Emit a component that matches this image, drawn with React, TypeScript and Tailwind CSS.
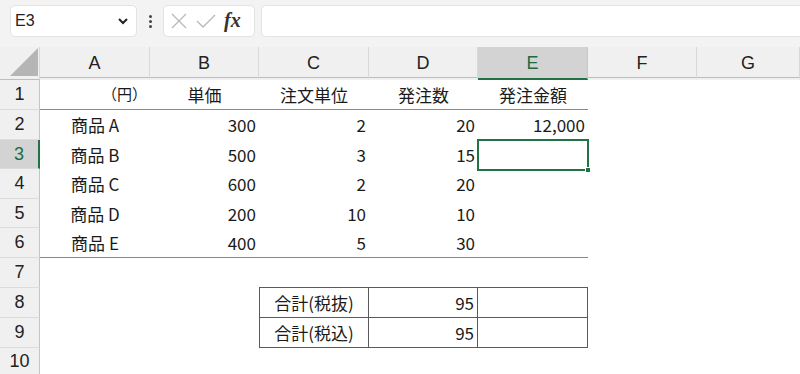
import React from "react";

const jp = { fontFamily: '"Noto Sans CJK JP", "Noto Sans", sans-serif' };
const ui = { fontFamily: '"Liberation Sans", Arial, sans-serif' };

const colW = [40, 110, 109, 110, 109, 110, 109, 103];
const rowH = [30, 30, 29, 30, 29, 30, 30, 30, 30, 28];
const cols = ["A", "B", "C", "D", "E", "F", "G"];

type Cell = { t?: string; a?: "l" | "c" | "r"; cls?: string };

const data: Record<string, Cell> = {
  A1: { t: "（円）", a: "r", cls: "!pr-[3px] !text-[15px]" },
  B1: { t: "単価", a: "c" },
  C1: { t: "注文単位", a: "c" },
  D1: { t: "発注数", a: "c" },
  E1: { t: "発注金額", a: "c" },
  A2: { t: "商品 A", a: "c" }, B2: { t: "300", a: "r" }, C2: { t: "2", a: "r" }, D2: { t: "20", a: "r" }, E2: { t: "12,000", a: "r" },
  A3: { t: "商品 B", a: "c" }, B3: { t: "500", a: "r" }, C3: { t: "3", a: "r" }, D3: { t: "15", a: "r" },
  A4: { t: "商品 C", a: "c" }, B4: { t: "600", a: "r" }, C4: { t: "2", a: "r" }, D4: { t: "20", a: "r" },
  A5: { t: "商品 D", a: "c" }, B5: { t: "200", a: "r" }, C5: { t: "10", a: "r" }, D5: { t: "10", a: "r" },
  A6: { t: "商品 E", a: "c" }, B6: { t: "400", a: "r" }, C6: { t: "5", a: "r" }, D6: { t: "30", a: "r" },
  C8: { t: "合計(税抜)", a: "c" }, D8: { t: "95", a: "r" },
  C9: { t: "合計(税込)", a: "c" }, D9: { t: "95", a: "r" },
};

function borderFor(col: string, row: number): string {
  const ci = cols.indexOf(col);
  let c = "";
  if ((row === 1 || row === 6) && ci <= 4) c += " border-b border-b-[#8a8a8a]";
  if ((row === 8 || row === 9) && ci >= 2 && ci <= 4) {
    c += " border-r border-r-[#5a5a5a] border-b border-b-[#5a5a5a]";
    if (ci === 2) c += " border-l border-l-[#5a5a5a]";
  }
  if (row === 7 && ci >= 2 && ci <= 4) c += " border-b border-b-[#5a5a5a]";
  return c;
}

export default function App() {
  return (
    <div className="w-[800px] h-[374px] overflow-hidden bg-[#f3f3f3] relative" style={ui}>
      {/* formula bar */}
      <div className="h-[47px] flex items-start pt-[5px] pl-[10px]">
        <div className="w-[127px] h-[32px] bg-white rounded-[5px] border border-[#e3e3e3] flex items-center justify-between pl-[4px] pr-[7px]">
          <span className="text-[16px] text-[#222]" style={ui}>E3</span>
          <svg width="12" height="8" viewBox="0 0 12 8">
            <path d="M2 2 L6 6 L10 2" stroke="#222" strokeWidth="2" fill="none" />
          </svg>
        </div>
        <div className="w-[26px] h-[32px] flex flex-col items-center justify-center gap-[2px]">
          <span className="w-[3px] h-[3px] bg-[#444] rounded-full" />
          <span className="w-[3px] h-[3px] bg-[#444] rounded-full" />
          <span className="w-[3px] h-[3px] bg-[#444] rounded-full" />
        </div>
        <div className="w-[92px] h-[32px] bg-white rounded-[5px] border border-[#e3e3e3] flex items-center pl-[6px] gap-[8px]">
          <svg width="18" height="18" viewBox="0 0 18 18">
            <path d="M2 2 L16 16 M16 2 L2 16" stroke="#b8b8b8" strokeWidth="1.3" fill="none" />
          </svg>
          <svg width="20" height="16" viewBox="0 0 20 16">
            <path d="M1 8 L7 14 L19 2" stroke="#b8b8b8" strokeWidth="1.3" fill="none" />
          </svg>
          <span className="italic font-bold text-[20px] text-[#333] -mt-[3px]" style={{ fontFamily: '"Liberation Serif", "Times New Roman", serif' }}>fx</span>
        </div>
        <div className="ml-[6px] flex-1 h-[32px] bg-white rounded-l-[5px] border border-[#e3e3e3] border-r-0" />
      </div>

      {/* grid */}
      <div
        className="grid"
        style={{
          gridTemplateColumns: colW.map((w) => w + "px").join(" "),
          gridTemplateRows: "33px " + rowH.map((h) => h + "px").join(" "),
        }}
      >
        {/* corner */}
        <div className="bg-[#f0f0f0] border-b border-b-[#bdbdbd] border-r border-r-[#d8d8d8] relative">
          <svg className="absolute left-[10px] bottom-[3px]" width="28" height="28" viewBox="0 0 28 28">
            <path d="M0 28 L28 28 L28 0 Z" fill="#b5b5b5" />
          </svg>
        </div>
        {cols.map((c) => (
          <div
            key={c}
            className={
              "flex items-center justify-center text-[18px] border-b-2 " +
              (c === "E"
                ? "bg-[#d3d3d3] text-[#1d6b3f] border-b-[#217346] border-r border-r-[#c8c8c8]"
                : "bg-[#f0f0f0] text-[#222] border-b-[#f0f0f0] border-r border-r-[#d8d8d8]")
            }
            style={{ boxShadow: c === "E" ? undefined : "inset 0 -1px 0 #bdbdbd" }}
          >
            <span className="mt-[2px]">{c}</span>
          </div>
        ))}

        {rowH.map((_, ri) => {
          const r = ri + 1;
          return (
            <React.Fragment key={r}>
              <div
                className={
                  "flex items-center justify-center text-[18px] border-b border-b-[#dcdcdc] " +
                  (r === 3
                    ? "bg-[#d3d3d3] text-[#1d6b3f] border-r-2 border-r-[#217346]"
                    : "bg-[#f0f0f0] text-[#222] border-r border-r-[#c4c4c4]")
                }
              >
                {r}
              </div>
              {cols.map((c) => {
                const d = data[c + r];
                const align =
                  d?.a === "r" ? "justify-end pr-[3px]" : d?.a === "c" ? "justify-center" : "justify-start pl-1";
                return (
                  <div
                    key={c + r}
                    className={"bg-white flex items-center text-[17px] text-[#1a1a1a] relative " + align + borderFor(c, r) + " " + (d?.cls ?? "")}
                    style={jp}
                  >
                    {d?.t}
                    {c === "E" && r === 3 && (
                      <div className="absolute z-10 -left-[1px] -top-[1px] w-[112px] h-[32px] border-2 border-[#217346]">
                        <div className="absolute -right-[4px] -bottom-[4px] w-[6px] h-[6px] bg-[#217346] border border-white" />
                      </div>
                    )}
                  </div>
                );
              })}
            </React.Fragment>
          );
        })}
      </div>
    </div>
  );
}
